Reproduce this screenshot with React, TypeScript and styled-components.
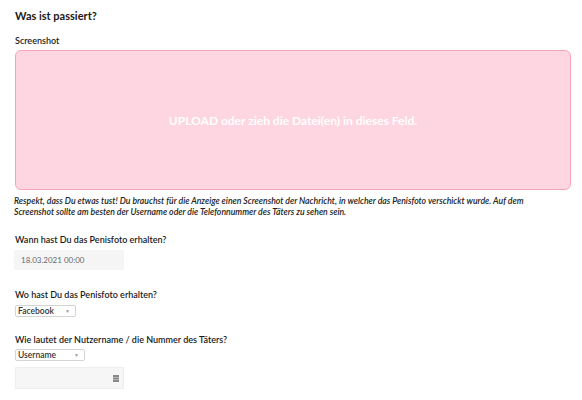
import styled, { createGlobalStyle } from 'styled-components'

const GlobalStyle = createGlobalStyle`
  body {
    margin: 0;
    background: #fff;
    font-family: Lato, "Liberation Sans", sans-serif;
    color: #1a1a1a;
  }
`

const Page = styled.div`
  padding: 8px 11px 0 15px;
`

const Title = styled.h2`
  margin: 0;
  font-size: 11px;
  line-height: 16px;
  font-weight: 700;
`

const Label = styled.div<{ gap: number }>`
  margin-top: ${({ gap }) => gap}px;
  font-size: 9px;
  line-height: 12px;
  font-weight: 600;
`

const Dropzone = styled.div`
  margin-top: 3px;
  height: 140px;
  box-sizing: border-box;
  border: 1px solid #f8a2b8;
  border-radius: 6px;
  background: #fed6e1;
  display: flex;
  align-items: center;
  justify-content: center;
  color: #fff;
  font-size: 12px;
  font-weight: 700;
`

const Hint = styled.p`
  margin: 5px 0 0 -1px;
  max-width: 540px;
  font-size: 8.7px;
  line-height: 11px;
  font-style: italic;
  font-weight: 600;
  color: #222;
`

const DateInput = styled.input`
  display: block;
  margin: 4px 0 0 -1px;
  width: 110px;
  height: 20px;
  box-sizing: border-box;
  padding: 0 7px;
  border: none;
  background: #f5f5f5;
  font-family: inherit;
  font-size: 8px;
  color: #6a6a6a;
  outline: none;
`

const Select = styled.div<{ width: number; gap: number }>`
  margin-top: ${({ gap }) => gap}px;
  width: ${({ width }) => width}px;
  height: 12px;
  box-sizing: border-box;
  padding: 0 5px 0 2px;
  border: 1px solid #d4d4d4;
  border-radius: 2px;
  display: flex;
  align-items: center;
  justify-content: space-between;
  font-size: 8.5px;
  font-weight: 600;
  color: #333;
`

const Caret = styled.span`
  font-size: 5px;
  color: #999;
`

const TextField = styled.div`
  margin-top: 6px;
  width: 109px;
  height: 22px;
  box-sizing: border-box;
  border: 1px solid #eee;
  background: #f6f6f6;
  display: flex;
  align-items: center;
  justify-content: flex-end;
  padding-right: 4px;
`

const KeyIcon = () => (
  <svg width="6" height="7" viewBox="0 0 6 7">
    <rect x="0" y="0" width="6" height="7" fill="#8a8a8a" />
    <rect x="0" y="2" width="6" height="0.6" fill="#cfcfcf" />
    <rect x="0" y="4" width="6" height="0.6" fill="#cfcfcf" />
  </svg>
)

export default function App() {
  return (
    <Page>
      <GlobalStyle />
      <Title>Was ist passiert?</Title>
      <Label gap={11}>Screenshot</Label>
      <Dropzone>UPLOAD oder zieh die Datei(en) in dieses Feld.</Dropzone>
      <Hint>
        Respekt, dass Du etwas tust! Du brauchst für die Anzeige einen Screenshot der Nachricht, in
        welcher das Penisfoto verschickt wurde. Auf dem Screenshot sollte am besten der Username oder
        die Telefonnummer des Täters zu sehen sein.
      </Hint>

      <Label gap={17}>Wann hast Du das Penisfoto erhalten?</Label>
      <DateInput readOnly value="18.03.2021 00:00" />

      <Label gap={19}>Wo hast Du das Penisfoto erhalten?</Label>
      <Select width={61} gap={4}>
        Facebook <Caret>▼</Caret>
      </Select>

      <Label gap={17}>Wie lautet der Nutzername / die Nummer des Täters?</Label>
      <Select width={70} gap={3}>
        Username <Caret>▼</Caret>
      </Select>
      <TextField>
        <KeyIcon />
      </TextField>
    </Page>
  )
}
